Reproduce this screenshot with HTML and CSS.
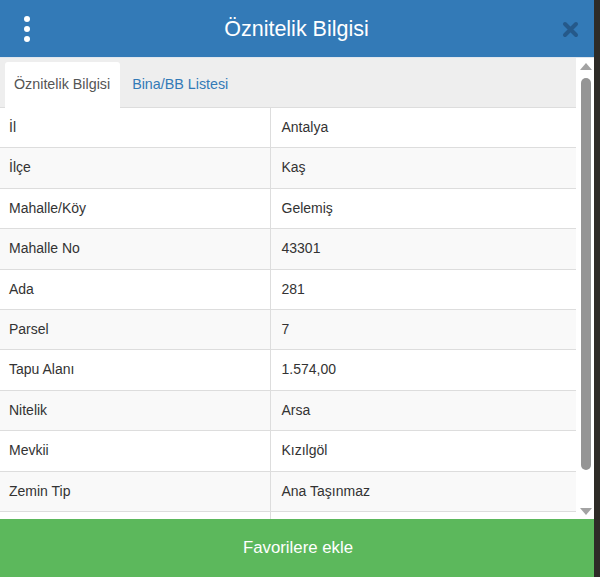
FILE: index.html
```html
<!DOCTYPE html>
<html lang="tr">
<head>
<meta charset="utf-8">
<title>Öznitelik Bilgisi</title>
<link rel="stylesheet" href="styles.css">
</head>
<body>
<div class="panel">
  <header class="panel-head">
    <button class="kebab" aria-label="Menü">
      <span></span><span></span><span></span>
    </button>
    <h1 class="title">Öznitelik Bilgisi</h1>
    <button class="close" aria-label="Kapat">
      <svg width="17" height="17" viewBox="0 0 17 17"><path d="M3 3 L14 14 M14 3 L3 14" stroke="currentColor" stroke-width="4" stroke-linecap="round"/></svg>
    </button>
  </header>
  <div class="panel-body">
    <div class="scroll-content">
      <nav class="tabs">
        <a class="tab active">Öznitelik Bilgisi</a>
        <a class="tab">Bina/BB Listesi</a>
      </nav>
      <table class="attr-table">
        <tr><td>İl</td><td>Antalya</td></tr>
        <tr><td>İlçe</td><td>Kaş</td></tr>
        <tr><td>Mahalle/Köy</td><td>Gelemiş</td></tr>
        <tr><td>Mahalle No</td><td>43301</td></tr>
        <tr><td>Ada</td><td>281</td></tr>
        <tr><td>Parsel</td><td>7</td></tr>
        <tr><td>Tapu Alanı</td><td>1.574,00</td></tr>
        <tr><td>Nitelik</td><td>Arsa</td></tr>
        <tr><td>Mevkii</td><td>Kızılgöl</td></tr>
        <tr><td>Zemin Tip</td><td>Ana Taşınmaz</td></tr>
        <tr><td>&nbsp;</td><td>&nbsp;</td></tr>
      </table>
    </div>
    <div class="scrollbar">
      <span class="arrow up"></span>
      <span class="thumb"></span>
      <span class="arrow down"></span>
    </div>
  </div>
  <button class="fav-btn">Favorilere ekle</button>
</div>
</body>
</html>
```
FILE: styles.css
```css
* { box-sizing: border-box; }

html, body {
  margin: 0;
  height: 100%;
}

body {
  background: #2e2b27;
  font-family: "Liberation Sans", Arial, sans-serif;
  font-size: 14px;
  color: #333;
  overflow: hidden;
}

.panel {
  width: 594px;
  height: 577px;
  display: flex;
  flex-direction: column;
  background: #fff;
}

/* Header bar */
.panel-head {
  height: 58px;
  flex: none;
  background: #337ab7;
  border-bottom: 1px solid #dfe6ee;
  display: flex;
  align-items: center;
  padding: 0 15px 0 21px;
}

.kebab {
  width: 12px;
  height: 26px;
  padding: 0;
  border: 0;
  background: none;
  display: flex;
  flex-direction: column;
  justify-content: space-between;
  align-items: center;
  margin-right: 10px;
}

.kebab span {
  width: 6px;
  height: 6px;
  border-radius: 50%;
  background: #fff;
}

.title {
  flex: 1;
  margin: 0;
  text-align: center;
  color: #fff;
  font-weight: normal;
  font-size: 21.5px;
  line-height: 26px;
  padding-right: 12px;
}

.close {
  border: 0;
  padding: 0;
  background: none;
  color: #25598a;
  width: 17px;
  height: 17px;
  display: flex;
  margin-top: 2px;
}

/* Body with table and scrollbar */
.panel-body {
  flex: 1;
  min-height: 0;
  display: flex;
  overflow: hidden;
}

.scroll-content {
  flex: 1;
  min-width: 0;
  overflow: hidden;
}

.tabs {
  background: #eee;
  display: flex;
  padding: 4px 0 0 5px;
  border-bottom: 1px solid #ddd;
  height: 50px;
}

.tab {
  display: block;
  padding: 0 11px 0 9px;
  line-height: 45px;
  color: #337ab7;
  margin-right: 2px;
  border-radius: 3px 3px 0 0;
  font-size: 14.3px;
}

.tab.active {
  background: #fff;
  color: #555;
  margin-bottom: -1px;
  padding-right: 10px;
  margin-right: 3px;
}

.attr-table {
  width: 100%;
  border-collapse: collapse;
  table-layout: fixed;
}

.attr-table td {
  padding: 10px 10px 10px 9px;
  line-height: 19.4px;
  border-top: 1px solid #ddd;
  vertical-align: middle;
}

.attr-table tr:first-child td { border-top: 0; }

.attr-table td:first-child {
  width: 270px;
  border-right: 1px solid #ddd;
}

.attr-table td:last-child { padding-left: 11px; }

.attr-table tr:nth-child(even) td { background: #f9f9f9; }

/* Scrollbar drawn alongside the content */
.scrollbar {
  width: 18px;
  flex: none;
  background: #fff;
  display: flex;
  flex-direction: column;
  align-items: center;
  padding: 5px 0 4px 2px;
}

.arrow {
  width: 0;
  height: 0;
  border-left: 6px solid transparent;
  border-right: 6px solid transparent;
  flex: none;
}

.arrow.up { border-bottom: 7px solid #a3a3a3; }
.arrow.down { border-top: 7px solid #a3a3a3; }

.thumb {
  width: 10px;
  height: 392px;
  margin: 8px 0 auto;
  border-radius: 5px;
  background: #959595;
}

/* Footer action */
.fav-btn {
  height: 58px;
  flex: none;
  border: 0;
  background: #5cb85c;
  color: #fff;
  font-family: inherit;
  font-size: 16.8px;
  padding: 0 0 0 2px;
}
```
